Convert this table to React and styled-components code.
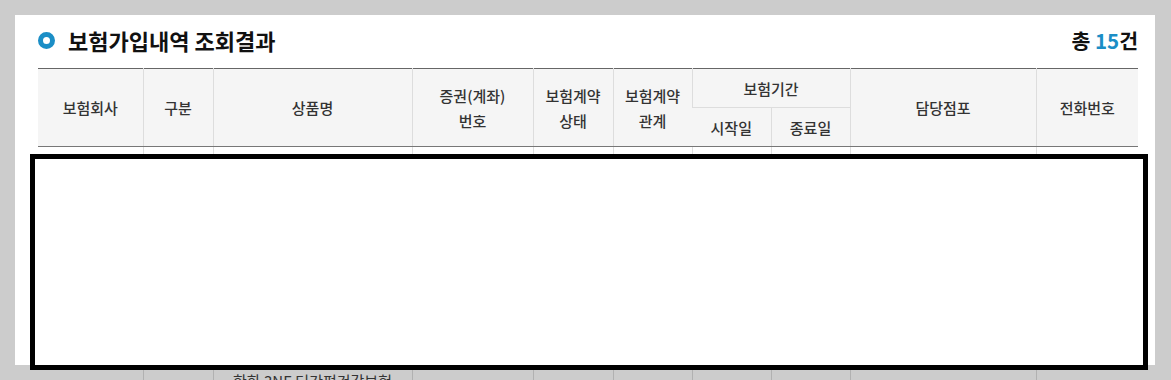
import React from 'react';
import styled, { createGlobalStyle } from 'styled-components';

const GlobalStyle = createGlobalStyle`
  html, body {
    margin: 0;
    padding: 0;
    overflow: hidden;
    background-color: #cccccc;
  }
  body {
    font-family: 'Noto Sans CJK KR', 'Noto Sans', sans-serif;
    color: #333;
  }
`;

const Page = styled.div`
  padding: 15px 16px 0 15px;
  height: 380px;
  box-sizing: border-box;
`;

const Panel = styled.section`
  position: relative;
  height: 350px;
  background-color: #fff;
  padding: 0 17px 0 23px;
  box-sizing: border-box;
`;

const TitleBar = styled.div`
  display: flex;
  align-items: center;
  justify-content: space-between;
  height: 50px;
  margin-bottom: 3px;
`;

const Title = styled.h2`
  display: flex;
  align-items: center;
  gap: 13px;
  margin: 0;
  font-size: 22px;
  font-weight: 700;
  color: #111;
`;

const Bullet = styled.span`
  width: 17px;
  height: 17px;
  border: 5px solid #1b8ec6;
  border-radius: 50%;
  box-sizing: border-box;
`;

const Total = styled.div`
  font-size: 20.5px;
  font-weight: 700;
  color: #111;
`;

const Count = styled.span`
  color: #1b8ec6;
`;

const Table = styled.table`
  width: 1100px;
  table-layout: fixed;
  border-collapse: collapse;
  border-top: 1px solid #666;
  font-size: 15px;
`;

const Th = styled.th`
  height: ${(p) => p.$h || 38}px;
  padding: 0;
  background-color: #f5f5f5;
  border-left: 1px solid #dddddd;
  border-bottom: 1px solid ${(p) => (p.$group ? '#dddddd' : '#777')};
  font-weight: 500;
  line-height: 25px;
  color: #333;
  text-align: center;
  vertical-align: middle;
  &:first-child {
    border-left: none;
  }
`;

const Td = styled.td`
  height: ${(p) => p.$h || 0}px;
  padding: ${(p) => (p.$pad ? '22px 0 0' : '0')};
  border-left: 1px solid rgba(0, 0, 0, 0.13);
  border-bottom: 1px solid rgba(0, 0, 0, 0.13);
  line-height: 22px;
  color: #333;
  text-align: center;
  vertical-align: top;
  &:first-child {
    border-left: none;
  }
`;

const Overlay = styled.div`
  position: absolute;
  left: 15px;
  top: 139px;
  width: 1118px;
  height: 216px;
  box-sizing: border-box;
  border: 5px solid #000;
  background-color: #fff;
`;

const widths = [105, 70, 199, 121, 80, 79, 79, 79, 186, 102];

const rows = [
  { h: 200, product: '' },
  { h: 80, product: '한화 3NE 더간편건강보험' },
];

export default function App() {
  return (
    <>
      <GlobalStyle />
      <Page>
        <Panel>
          <TitleBar>
            <Title>
              <Bullet />
              보험가입내역 조회결과
            </Title>
            <Total>
              총 <Count>15</Count>건
            </Total>
          </TitleBar>
          <Table>
            <colgroup>
              {widths.map((w, i) => (
                <col key={i} style={{ width: w }} />
              ))}
            </colgroup>
            <thead>
              <tr>
                <Th rowSpan={2}>보험회사</Th>
                <Th rowSpan={2}>구분</Th>
                <Th rowSpan={2}>상품명</Th>
                <Th rowSpan={2}>
                  증권(계좌)
                  <br />
                  번호
                </Th>
                <Th rowSpan={2}>
                  보험계약
                  <br />
                  상태
                </Th>
                <Th rowSpan={2}>
                  보험계약
                  <br />
                  관계
                </Th>
                <Th colSpan={2} $group>
                  보험기간
                </Th>
                <Th rowSpan={2}>담당점포</Th>
                <Th rowSpan={2}>전화번호</Th>
              </tr>
              <tr>
                <Th $h={38}>시작일</Th>
                <Th $h={38}>종료일</Th>
              </tr>
            </thead>
            <tbody>
              {rows.map((r, i) => (
                <tr key={i}>
                  {widths.map((_, c) => (
                    <Td key={c} $h={r.h} $pad={i > 0}>
                      {c === 2 ? r.product : ''}
                    </Td>
                  ))}
                </tr>
              ))}
            </tbody>
          </Table>
          <Overlay />
        </Panel>
      </Page>
    </>
  );
}
